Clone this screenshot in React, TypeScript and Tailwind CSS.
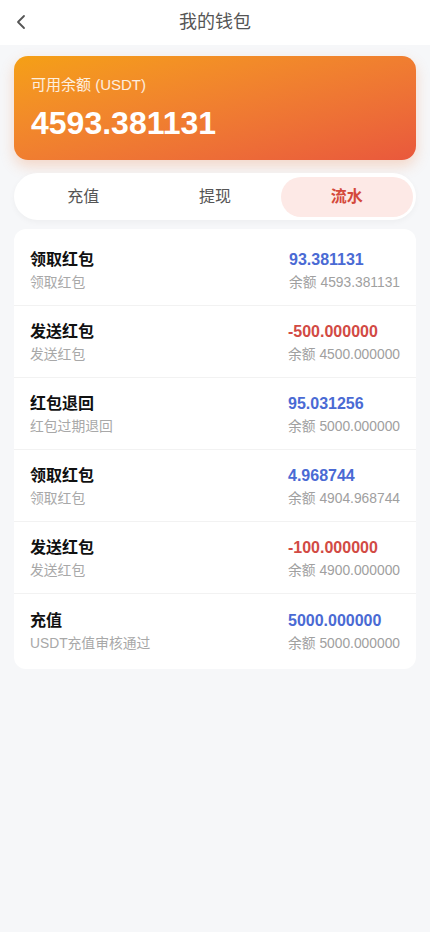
import { ChevronLeft } from "lucide-react";

const records = [
  { title: "领取红包", desc: "领取红包", amount: "93.381131", balance: "4593.381131", out: false },
  { title: "发送红包", desc: "发送红包", amount: "-500.000000", balance: "4500.000000", out: true },
  { title: "红包退回", desc: "红包过期退回", amount: "95.031256", balance: "5000.000000", out: false },
  { title: "领取红包", desc: "领取红包", amount: "4.968744", balance: "4904.968744", out: false },
  { title: "发送红包", desc: "发送红包", amount: "-100.000000", balance: "4900.000000", out: true },
  { title: "充值", desc: "USDT充值审核通过", amount: "5000.000000", balance: "5000.000000", out: false },
];

export default function App() {
  return (
    <div
      className="min-h-screen bg-[#f6f7f9] text-[#333]"
      style={{ fontFamily: '"Liberation Sans", "Noto Sans CJK SC", sans-serif' }}
    >
      <header className="relative flex h-[45px] items-center justify-center bg-white">
        <button className="absolute left-[9px] top-[10px] text-[#555]">
          <ChevronLeft size={24} strokeWidth={1.8} />
        </button>
        <h1 className="text-[18px] text-[#555]">我的钱包</h1>
      </header>

      <div className="flex flex-col px-[14px] pt-[11px]">
        <div className="flex h-[104px] flex-col justify-center rounded-[14px] bg-gradient-to-br from-[#f5a014] to-[#e9583c] px-[17px] shadow-[0_6px_14px_rgba(240,120,50,0.25)]">
          <div className="text-[15px] leading-5 text-white/85">可用余额 (USDT)</div>
          <div className="mt-[10px] text-[32px] font-bold leading-9 text-white">4593.381131</div>
        </div>

        <div className="mt-[13px] flex rounded-[24px] bg-white p-[3.5px] shadow-[0_2px_6px_rgba(0,0,0,0.04)]">
          {["充值", "提现", "流水"].map((t, i) => (
            <div
              key={t}
              className={
                i === 2
                  ? "flex h-10 flex-1 items-center justify-center rounded-full bg-[#fde9e6] text-[16px] font-bold text-[#d4493b]"
                  : "flex h-10 flex-1 items-center justify-center text-[16px] text-[#555]"
              }
            >
              {t}
            </div>
          ))}
        </div>

        <div className="mt-[9px] rounded-[12px] bg-white pb-[3px] pt-[5px]">
          {records.map((r, i) => (
            <div
              key={i}
              className={
                "flex h-[72px] items-center justify-between px-4 pt-[2px]" +
                (i < records.length - 1 ? " border-b border-[#f2f2f2]" : "")
              }
            >
              <div className="flex flex-col gap-[1px]">
                <div className="text-[16px] font-bold leading-6 text-[#111]">{r.title}</div>
                <div className="text-[13.8px] leading-5 text-[#a8a8a8]">{r.desc}</div>
              </div>
              <div className="flex flex-col gap-[1px]">
                <div className={"text-[16px] font-bold leading-6 " + (r.out ? "text-[#d24a44]" : "text-[#4a6ad4]")}>
                  {r.amount}
                </div>
                <div className="text-[13.8px] leading-5 text-[#a0a0a0]">余额 {r.balance}</div>
              </div>
            </div>
          ))}
        </div>
      </div>
    </div>
  );
}
